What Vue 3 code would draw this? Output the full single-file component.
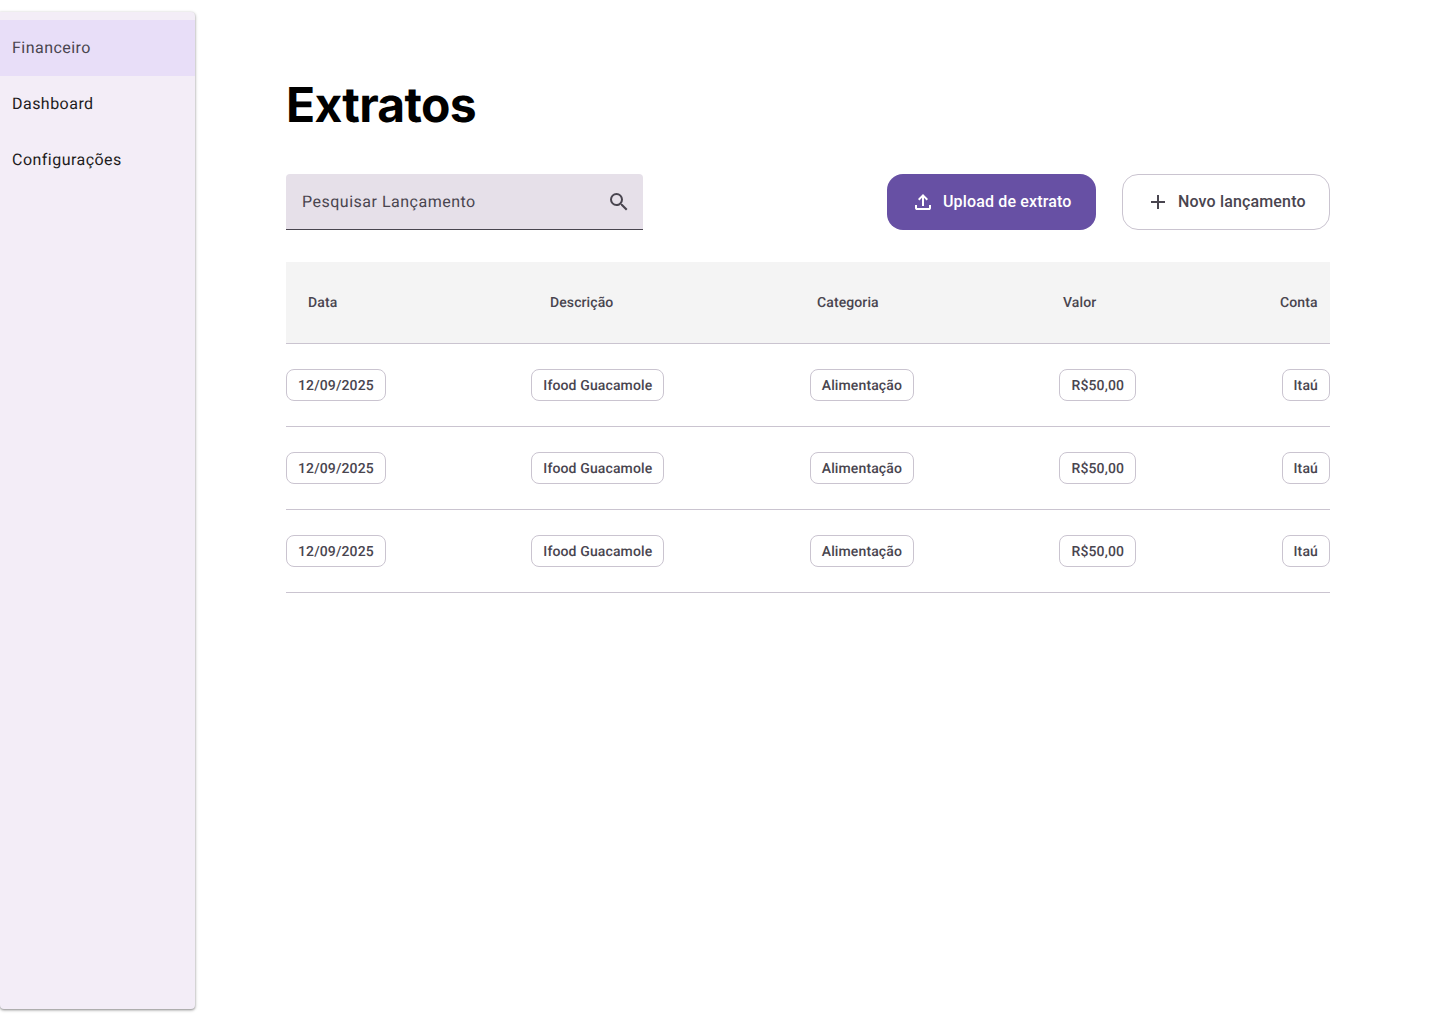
<script setup>
const menu = [
  { label: 'Financeiro', active: true },
  { label: 'Dashboard', active: false },
  { label: 'Configurações', active: false },
]
const columns = ['Data', 'Descrição', 'Categoria', 'Valor', 'Conta']
const rows = [
  ['12/09/2025', 'Ifood Guacamole', 'Alimentação', 'R$50,00', 'Itaú'],
  ['12/09/2025', 'Ifood Guacamole', 'Alimentação', 'R$50,00', 'Itaú'],
  ['12/09/2025', 'Ifood Guacamole', 'Alimentação', 'R$50,00', 'Itaú'],
]
</script>

<template>
  <div class="page">
    <aside class="sidebar">
      <div v-for="item in menu" :key="item.label" class="menu-item" :class="{ active: item.active }">
        {{ item.label }}
      </div>
    </aside>

    <main class="content">
      <h1 class="title">Extratos</h1>

      <div class="toolbar">
        <div class="search">
          <span class="search-text">Pesquisar Lançamento</span>
          <svg class="search-icon" width="24" height="24" viewBox="0 0 24 24">
            <path fill="#49454f" d="M15.5 14h-.79l-.28-.27A6.47 6.47 0 0 0 16 9.5 6.5 6.5 0 1 0 9.5 16c1.61 0 3.09-.59 4.23-1.57l.27.28v.79l5 4.99L20.49 19l-4.99-5zm-6 0C7.01 14 5 11.99 5 9.5S7.01 5 9.5 5 14 7.01 14 9.5 11.99 14 9.5 14z"/>
          </svg>
        </div>
        <div class="actions">
          <button class="btn btn-primary">
            <svg width="24" height="24" viewBox="0 0 24 24">
              <path fill="#fff" d="M11 16V7.85l-2.6 2.6L7 9l5-5 5 5-1.4 1.45-2.6-2.6V16h-2Zm-5 4q-.825 0-1.413-.587T4 18v-3h2v3h12v-3h2v3q0 .825-.587 1.413T18 20H6Z"/>
            </svg>
            <span class="btn-label">Upload de extrato</span>
          </button>
          <button class="btn btn-outline">
            <svg width="24" height="24" viewBox="0 0 24 24">
              <path fill="#49454f" d="M11 13H5v-2h6V5h2v6h6v2h-6v6h-2v-6Z"/>
            </svg>
            <span class="btn-label">Novo lançamento</span>
          </button>
        </div>
      </div>

      <div class="table">
        <div class="table-head">
          <span v-for="col in columns" :key="col" class="head-cell">{{ col }}</span>
        </div>
        <div v-for="(row, i) in rows" :key="i" class="table-row">
          <span v-for="(cell, j) in row" :key="j" class="chip">{{ cell }}</span>
        </div>
      </div>
    </main>
  </div>
</template>

<style>
html, body {
  margin: 0;
  background: #fff;
}
</style>

<style scoped>
.page {
  display: flex;
  height: 1024px;
  font-family: Roboto, "Liberation Sans", sans-serif;
  text-rendering: geometricPrecision;
  overflow: hidden;
}

.sidebar {
  box-sizing: border-box;
  width: 195px;
  height: 997px;
  margin-top: 12px;
  padding-top: 8px;
  background: #f3edf7;
  border-radius: 0 4px 4px 4px;
  box-shadow: 0 1px 2px rgba(0, 0, 0, 0.3), 0 1px 3px 1px rgba(0, 0, 0, 0.15);
  flex-shrink: 0;
}

.menu-item {
  box-sizing: border-box;
  height: 56px;
  padding: 0 0 2px 12px;
  display: flex;
  align-items: center;
  font-size: 16px;
  letter-spacing: 0.47px;
  color: #1d1b20;
}

.menu-item.active {
  background: #e8def8;
  color: #49454f;
}

.content {
  width: 1044px;
  margin-left: 91px;
}

.title {
  margin: 77px 0 0;
  font-family: Inter, sans-serif;
  font-size: 48px;
  font-weight: 700;
  line-height: 56px;
  letter-spacing: -0.7px;
  color: #000;
}

.toolbar {
  display: flex;
  justify-content: space-between;
  margin-top: 41px;
}

.search {
  box-sizing: border-box;
  width: 357px;
  height: 56px;
  display: flex;
  align-items: center;
  justify-content: space-between;
  padding: 0 12px 0 16px;
  background: #e6e0e9;
  border-bottom: 1px solid #49454f;
  border-radius: 4px 4px 0 0;
}

.search-text {
  font-size: 16px;
  letter-spacing: 0.5px;
  color: #49454f;
}

.actions {
  display: flex;
  gap: 26px;
}

.btn {
  box-sizing: border-box;
  height: 56px;
  display: flex;
  align-items: center;
  gap: 8px;
  font-family: Roboto, sans-serif;
  font-size: 16px;
  font-weight: 500;
  letter-spacing: 0.15px;
  border-radius: 16px;
}

.btn-label {
  margin-bottom: 2px;
}

.btn-primary {
  width: 209px;
  padding: 0 0 0 24px;
  background: #6750a4;
  border: none;
  color: #fff;
}

.btn-outline {
  width: 208px;
  padding: 0 0 0 23px;
  background: #fff;
  border: 1px solid #cac4d0;
  color: #49454f;
}

.table {
  margin-top: 32px;
}

.table-head {
  box-sizing: border-box;
  height: 82px;
  padding-left: 22px;
  display: grid;
  grid-template-columns: 242px 267px 246px 217px 1fr;
  align-items: center;
  background: #f4f4f4;
  border-bottom: 1px solid #cac4d0;
}

.head-cell {
  font-size: 14px;
  font-weight: 500;
  letter-spacing: 0.1px;
  color: #49454f;
}

.table-row {
  box-sizing: border-box;
  height: 83px;
  display: flex;
  justify-content: space-between;
  align-items: center;
  border-bottom: 1px solid #cac4d0;
}

.chip {
  box-sizing: border-box;
  height: 32px;
  padding: 2px 11px 0;
  display: flex;
  align-items: center;
  border: 1px solid #cac4d0;
  border-radius: 8px;
  font-size: 14px;
  font-weight: 500;
  letter-spacing: 0.13px;
  color: #49454f;
}
</style>
